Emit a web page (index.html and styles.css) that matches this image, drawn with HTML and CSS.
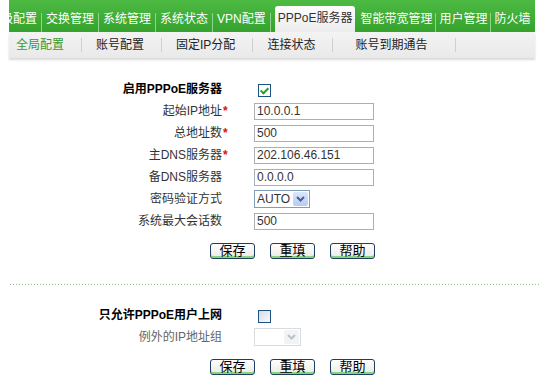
FILE: index.html
```html
<!DOCTYPE html>
<html lang="zh-CN">
<head>
    <meta charset="UTF-8">
    <title>PPPoE服务器 - 全局配置</title>
    <link rel="stylesheet" href="styles.css">
</head>
<body>
    <div class="nav">
        <!-- Menú principal -->
        <div class="mainbar">
            <ul class="menu">
                <li>高级配置</li>
                <li>交换管理</li>
                <li>系统管理</li>
                <li>系统状态</li>
                <li>VPN配置</li>
                <li class="active">PPPoE服务器</li>
                <li>智能带宽管理</li>
                <li>用户管理</li>
                <li>防火墙</li>
            </ul>
        </div>
        <!-- Submenú -->
        <ul class="subbar">
            <li class="current">全局配置</li>
            <li>账号配置</li>
            <li>固定IP分配</li>
            <li>连接状态</li>
            <li class="wide">账号到期通告</li>
        </ul>
    </div>

    <form class="panel">
        <div class="grid">
            <label class="title">启用PPPoE服务器<span class="star"></span></label>
            <div><input type="checkbox" class="check" checked></div>

            <label>起始IP地址<span class="star">*</span></label>
            <div><input type="text" class="field" value="10.0.0.1"></div>

            <label>总地址数<span class="star">*</span></label>
            <div><input type="text" class="field" value="500"></div>

            <label>主DNS服务器<span class="star">*</span></label>
            <div><input type="text" class="field" value="202.106.46.151"></div>

            <label>备DNS服务器<span class="star"></span></label>
            <div><input type="text" class="field" value="0.0.0.0"></div>

            <label>密码验证方式<span class="star"></span></label>
            <div>
                <span class="select">
                    <select><option>AUTO</option><option>PAP</option><option>CHAP</option></select>
                    <span class="arrow"><svg width="9" height="6" viewBox="0 0 9 6"><path d="M1 1 L4.5 4.5 L8 1" fill="none" stroke="#4d6185" stroke-width="2"/></svg></span>
                </span>
            </div>

            <label>系统最大会话数<span class="star"></span></label>
            <div><input type="text" class="field" value="500"></div>
        </div>
        <div class="buttons">
            <button type="button">保存</button>
            <button type="button">重填</button>
            <button type="button">帮助</button>
        </div>
    </form>

    <hr class="dots">

    <form class="panel second">
        <div class="grid">
            <label class="title">只允许PPPoE用户上网<span class="star"></span></label>
            <div><input type="checkbox" class="check"></div>

            <label class="muted">例外的IP地址组<span class="star"></span></label>
            <div>
                <span class="select disabled">
                    <select disabled><option></option></select>
                    <span class="arrow"><svg width="9" height="6" viewBox="0 0 9 6"><path d="M1 1 L4.5 4.5 L8 1" fill="none" stroke="#b9c2cc" stroke-width="2"/></svg></span>
                </span>
            </div>
        </div>
        <div class="buttons">
            <button type="button">保存</button>
            <button type="button">重填</button>
            <button type="button">帮助</button>
        </div>
    </form>
</body>
</html>
```

FILE: styles.css
```css
/* Estilos generales */
* {
    margin: 0;
    padding: 0;
    box-sizing: border-box;
}

body {
    background: #fff;
    color: #333;
    font: 12px/16px "Liberation Sans", "Noto Sans CJK SC", sans-serif;
}

ul {
    list-style: none;
}

/* Navegación */
.nav {
    margin: 0 6px 0 9px;
}

.mainbar {
    height: 32px;
    overflow: hidden;
    background: linear-gradient(#4dba44, #35a22d);
}

.menu {
    display: flex;
    align-items: flex-end;
    height: 32px;
    margin-left: -24px;
    white-space: nowrap;
}

.menu li {
    color: #fff;
    padding: 0 4px 7px;
    border-right: 1px solid #8fd488;
    line-height: 12px;
}

.menu li.active {
    color: #333;
    background: linear-gradient(#fdfdfd, #ececec);
    border: none;
    border-radius: 3px 3px 0 0;
    padding: 6px 3px 8px;
    margin: 0 2px 0 4px;
}

.menu li.active ~ li {
    padding: 0 3px 7px;
}

.menu li:last-child {
    border-right: none;
}

.subbar {
    display: flex;
    align-items: center;
    height: 26px;
    background: linear-gradient(#f3f3f3, #e9e9e9);
    box-shadow: 0 2px 2px rgba(0, 0, 0, 0.15);
    padding-left: 7px;
}

.subbar li {
    padding: 0 17px 0 0;
    margin-right: 14px;
    border-right: 1px solid #cfcfcf;
    line-height: 14px;
    color: #222;
}

.subbar li.current {
    color: #3a9a2c;
}

.subbar li.wide {
    margin-left: 8px;
    padding-right: 28px;
}

/* Formularios */
.panel {
    margin-top: 20px;
}

.panel.second {
    margin-top: 19px;
}

.grid {
    display: grid;
    grid-template-columns: 232px 1fr;
    column-gap: 22px;
    grid-auto-rows: 22px;
    align-items: center;
}

.grid label {
    text-align: right;
    padding-right: 2px;
    color: #333;
}

.grid label.title {
    font-weight: bold;
    color: #000;
}

.grid label.muted {
    color: #666;
}

.star {
    display: inline-block;
    width: 8px;
    padding-left: 1px;
    text-align: left;
    color: #e01010;
    font-weight: bold;
}

.field {
    width: 120px;
    height: 17px;
    border: 1px solid #a9afb5;
    padding: 0 2px;
    font: 12px "Liberation Sans", sans-serif;
    color: #333;
    display: block;
}

.check {
    appearance: none;
    width: 13px;
    height: 13px;
    margin: 3px 0 0 4px;
    border: 1px solid #1c5180;
    background: linear-gradient(135deg, #d6dde6, #f8f9fb);
    display: block;
    position: relative;
}

.check:checked {
    background: #fff;
}

.check:checked::after {
    content: "";
    position: absolute;
    left: 3px;
    top: 1px;
    width: 3px;
    height: 6px;
    border: solid #21a121;
    border-width: 0 2px 2px 0;
    transform: rotate(45deg);
}

/* Select estilo XP */
.select {
    position: relative;
    display: inline-block;
    vertical-align: middle;
}

.select select {
    appearance: none;
    width: 56px;
    height: 18px;
    border: 1px solid #7f9db9;
    background: #fff;
    padding: 0 0 0 2px;
    font: 12px "Liberation Sans", sans-serif;
    color: #333;
    display: block;
}

.select .arrow {
    position: absolute;
    right: 2px;
    top: 2px;
    width: 15px;
    height: 14px;
    border-radius: 2px;
    background: linear-gradient(#dbe6fd, #b7cbf7);
    display: flex;
    align-items: center;
    justify-content: center;
    pointer-events: none;
}

.select.disabled select {
    width: 47px;
    border-color: #c9cdd1;
}

.select.disabled .arrow {
    background: #f2f3f4;
}

/* Botones */
.buttons {
    display: flex;
    gap: 15px;
    padding-left: 210px;
    margin-top: 11px;
}

.buttons button {
    width: 45px;
    height: 16px;
    border: 1px solid #1f3c62;
    border-radius: 3px;
    background: linear-gradient(#fefefe, #ebeae5);
    box-shadow: inset 0 -2px 0 #86d47c;
    font: 13px/14px "Liberation Sans", "Noto Sans CJK SC", sans-serif;
    color: #000;
    cursor: pointer;
}

.dots {
    border: none;
    height: 1px;
    margin: 25px 0 0 10px;
    background: repeating-linear-gradient(90deg, #8cbf8c 0 1px, transparent 1px 3px);
}
```
